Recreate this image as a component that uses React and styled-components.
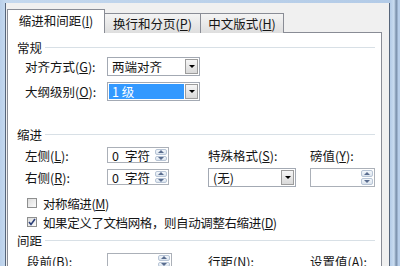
import React from 'react';
import styled, { createGlobalStyle } from 'styled-components';

const GlobalStyle = createGlobalStyle`
  html, body {
    margin: 0;
    padding: 0;
    overflow: hidden;
  }
  body {
    width: 400px;
    height: 266px;
    font-family: "Noto Sans CJK SC", "Noto Sans", sans-serif;
    font-size: 12.5px;
    color: #151515;
  }
`;

const Frame = styled.div`
  width: 400px;
  height: 266px;
  box-sizing: border-box;
  padding: 3px 0 0 5px;
  display: flex;
  overflow: hidden;
  background: linear-gradient(90deg, #bad0ea 0, #c4d8ee 5px, #b3cbe7 390px, #c9dcf0 394px, #7f95b0 396px, #7f95b0 397px, #b6cde9 398px);
`;

const Dialog = styled.div`
  width: 385px;
  flex: none;
  box-sizing: border-box;
  border-left: 1px solid #56657a;
  border-right: 1px solid #56657a;
  background: #f0f0f0;
  padding: 6px 7px 0 1px;
  display: flex;
  flex-direction: column;
`;

const TabBar = styled.div`
  display: flex;
  align-items: flex-end;
  height: 24px;
  flex: none;
`;

const Tab = styled.div`
  box-sizing: border-box;
  width: ${p => p.$w}px;
  height: ${p => (p.$active ? 24 : 20)}px;
  border: 1px solid #898c95;
  border-bottom: none;
  border-left: ${p => (p.$first ? '1px solid #898c95' : 'none')};
  background: ${p => (p.$active ? '#fff' : 'linear-gradient(#f4f4f4, #dedede)')};
  position: relative;
  z-index: ${p => (p.$active ? 1 : 0)};
  display: flex;
  align-items: center;
  justify-content: center;
  padding-bottom: ${p => (p.$active ? 2 : 0)}px;
  white-space: nowrap;
`;

const Panel = styled.div`
  flex: 1;
  margin-top: -1px;
  border: 1px solid #898c95;
  border-bottom: none;
  background: #fff;
  padding: 7px 6px 0 9px;
`;

const Section = styled.div`
  display: flex;
  align-items: center;
  gap: 3px;
  height: 14px;
  margin-top: ${p => p.$mt || 0}px;

  &::after {
    content: '';
    flex: 1;
    height: 1px;
    background: #d8e0e6;
  }
`;

const Row = styled.div`
  display: flex;
  align-items: center;
  height: ${p => p.$h}px;
  margin-top: ${p => p.$mt || 0}px;
  padding-left: ${p => (p.$indent === undefined ? 8 : p.$indent)}px;
  white-space: nowrap;
`;

const Label = styled.span`
  flex: none;
  width: ${p => p.$w || 82}px;
  white-space: nowrap;
`;

const Key = styled.u`
  text-underline-offset: 1px;
`;

const Combo = styled.div`
  box-sizing: border-box;
  width: ${p => p.$w}px;
  height: 19px;
  flex: none;
  border: 1px solid #a3a9b3;
  background: #fff;
  display: flex;
  padding: 1px;
`;

const ComboText = styled.div`
  flex: 1;
  display: flex;
  align-items: center;
  margin-right: 1px;
  padding-left: 3px;
  background: ${p => (p.$selected ? '#3399ff' : 'transparent')};
  color: ${p => (p.$selected ? '#fff' : 'inherit')};
`;

const DropButton = styled.div`
  box-sizing: border-box;
  width: 13px;
  border: 1px solid #9c9c9c;
  background: linear-gradient(#f6f6f6, #d9d9d9);
  display: flex;
  align-items: center;
  justify-content: center;

  &::after {
    content: '';
    border-left: 3px solid transparent;
    border-right: 3px solid transparent;
    border-top: 3px solid #000;
  }
`;

const Spin = styled.div`
  box-sizing: border-box;
  width: ${p => p.$w}px;
  height: ${p => p.$h || 16}px;
  flex: none;
  border: 1px solid #abb0b8;
  background: #fff;
  display: flex;
  padding: 1px;
`;

const SpinText = styled.div`
  flex: 1;
  display: flex;
  align-items: center;
  gap: 6px;
  padding-left: 3px;
`;

const SpinButtons = styled.div`
  width: 12px;
  display: flex;
  flex-direction: column;
  gap: 1px;
`;

const SpinHalf = styled.div`
  flex: 1;
  box-sizing: border-box;
  border: 1px solid #b8c5d6;
  border-radius: 2px;
  background: linear-gradient(#f3f7fb, #dbe4ee);
  display: flex;
  align-items: center;
  justify-content: center;

  &::after {
    content: '';
    border-left: 3px solid transparent;
    border-right: 3px solid transparent;
    ${p => (p.$up ? 'border-bottom: 3px solid #5a6d8f;' : 'border-top: 3px solid #5a6d8f;')}
  }
`;

const IndentBlock = styled.div`
  display: flex;
  margin-top: 6px;
  padding-left: 8px;
`;

const LeftColumn = styled.div`
  width: 183px;
  flex: none;
  display: flex;
  flex-direction: column;
`;

const RightGrid = styled.div`
  display: grid;
  grid-template-columns: 102px auto;
  grid-template-rows: 16px 19px;
  row-gap: 5px;
  align-items: center;
  white-space: nowrap;
`;

const CheckRow = styled.label`
  display: flex;
  align-items: center;
  height: 14px;
  margin-top: ${p => p.$mt || 0}px;
  padding-left: 10px;
  letter-spacing: -0.4px;
  white-space: nowrap;
`;

const CheckBox = styled.span`
  box-sizing: border-box;
  width: 10px;
  height: 10px;
  flex: none;
  margin-right: 6px;
  border: 1px solid #8e8f8f;
  background: linear-gradient(135deg, #dcdcdc, #fbfbfb);
  display: flex;
  align-items: center;
  justify-content: center;
`;

const Hot = ({ k }) => (
  <>
    (<Key>{k}</Key>)
  </>
);

const Spinner = ({ w, h, children }) => (
  <Spin $w={w} $h={h}>
    <SpinText>{children}</SpinText>
    <SpinButtons>
      <SpinHalf $up />
      <SpinHalf />
    </SpinButtons>
  </Spin>
);

const Check = ({ checked, children, mt }) => (
  <CheckRow $mt={mt}>
    <CheckBox>
      {checked && (
        <svg width="8" height="8" viewBox="0 0 8 8">
          <path d="M1 4 L3 6.5 L7 1" fill="none" stroke="#2b3f78" strokeWidth="1.6" />
        </svg>
      )}
    </CheckBox>
    {children}
  </CheckRow>
);

export default function App() {
  return (
    <>
      <GlobalStyle />
      <Frame>
        <Dialog>
          <TabBar>
            <Tab $w={98} $first $active>缩进和间距<Hot k="I" /></Tab>
            <Tab $w={96}>换行和分页<Hot k="P" /></Tab>
            <Tab $w={83}>中文版式<Hot k="H" /></Tab>
          </TabBar>
          <Panel>
            <Section>常规</Section>
            <Row $h={19} $mt={3}>
              <Label>对齐方式<Hot k="G" />:</Label>
              <Combo $w={93}>
                <ComboText>两端对齐</ComboText>
                <DropButton />
              </Combo>
            </Row>
            <Row $h={19} $mt={6}>
              <Label>大纲级别<Hot k="O" />:</Label>
              <Combo $w={93}>
                <ComboText $selected>1 级</ComboText>
                <DropButton />
              </Combo>
            </Row>

            <Section $mt={26}>缩进</Section>
            <IndentBlock>
              <LeftColumn>
                <Row $h={16} $indent={0}>
                  <Label>左侧<Hot k="L" />:</Label>
                  <Spinner w={62}>0<span>字符</span></Spinner>
                </Row>
                <Row $h={16} $mt={6} $indent={0}>
                  <Label>右侧<Hot k="R" />:</Label>
                  <Spinner w={62}>0<span>字符</span></Spinner>
                </Row>
              </LeftColumn>
              <RightGrid>
                <span>特殊格式<Hot k="S" />:</span>
                <span>磅值<Hot k="Y" />:</span>
                <Combo $w={88}>
                  <ComboText>(无)</ComboText>
                  <DropButton />
                </Combo>
                <Spinner w={65} h={19} />
              </RightGrid>
            </IndentBlock>

            <Check mt={9}>对称缩进<Hot k="M" /></Check>
            <Check mt={5} checked>如果定义了文档网格，则自动调整右缩进<Hot k="D" /></Check>

            <Section $mt={4}>间距</Section>
            <Row $h={16} $mt={6} $indent={10}>
              <Label $w={80}>段前<Hot k="B" />:</Label>
              <Spinner w={65} />
              <Label $w={36} />
              <Label $w={102}>行距<Hot k="N" />:</Label>
              <Label>设置值<Hot k="A" />:</Label>
            </Row>
          </Panel>
        </Dialog>
      </Frame>
    </>
  );
}
